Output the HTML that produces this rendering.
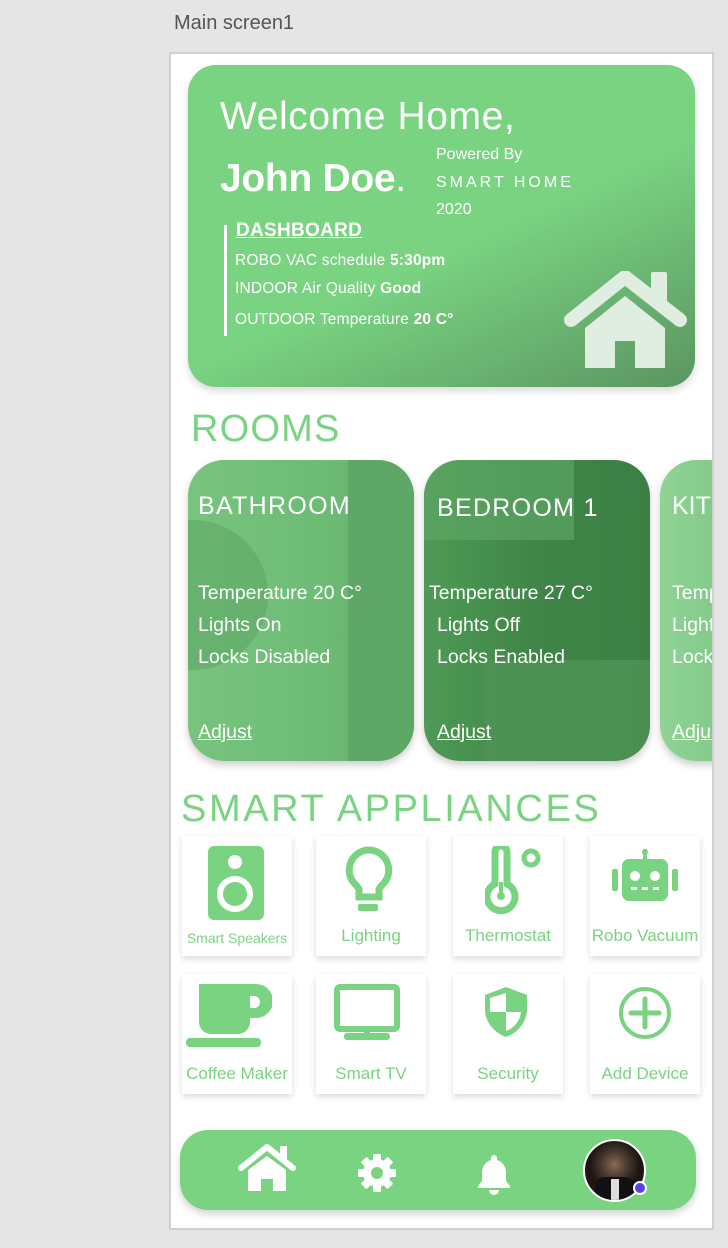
<!DOCTYPE html>
<html><head><meta charset="utf-8"><style>
*{margin:0;padding:0;box-sizing:border-box}
body{width:728px;height:1248px;background:#e5e5e5;font-family:"Liberation Sans",sans-serif;position:relative;overflow:hidden}
.a{position:absolute}
.frame{left:169px;top:52px;width:545px;height:1178px;background:#fff;border:2px solid #d0d0d0;overflow:hidden}
.w{color:#fff;white-space:nowrap}
.g{color:#79d381;white-space:nowrap}
.tile{background:#fff;box-shadow:0 3px 6px rgba(0,0,0,.14);width:110px;height:120px}
.tile span{position:absolute;left:0;right:0;bottom:10px;text-align:center;font-size:17px;color:#79d381;white-space:nowrap}
.room{width:226px;height:301px;border-radius:36px;overflow:hidden;box-shadow:0 4px 8px rgba(0,0,0,.2)}
.room .w{position:absolute;font-size:19.5px}
</style></head><body>
<div class="a" style="left:174px;top:12px;font-size:20px;color:#555">Main screen1</div>
<div class="a frame">
 <div class="a" style="left:17px;top:11px;width:507px;height:322px;border-radius:28px;background:linear-gradient(155deg,#79d381 0%,#79d381 55%,#5b9561 100%);box-shadow:0 4px 8px rgba(0,0,0,.15)">
  <div class="a w" style="left:32px;top:30px;font-size:39px;letter-spacing:.6px">Welcome Home,</div>
  <div class="a w" style="left:32px;top:92px;font-size:39px;font-weight:bold;letter-spacing:-0.3px">John Doe<span style="font-weight:normal">.</span></div>
  <div class="a w" style="left:248px;top:81px;font-size:16px">Powered By</div>
  <div class="a w" style="left:248px;top:109px;font-size:16px;letter-spacing:3px">SMART HOME</div>
  <div class="a w" style="left:248px;top:136px;font-size:16px">2020</div>
  <div class="a" style="left:36px;top:160px;width:3px;height:111px;background:#fff"></div>
  <div class="a w" style="left:48px;top:155px;font-size:19px;font-weight:bold;text-decoration:underline;letter-spacing:.3px">DASHBOARD</div>
  <div class="a w" style="left:47px;top:187px;font-size:15.5px;letter-spacing:.2px">ROBO VAC schedule <b>5:30pm</b></div>
  <div class="a w" style="left:47px;top:215px;font-size:15.5px;letter-spacing:.2px">INDOOR Air Quality <b>Good</b></div>
  <div class="a w" style="left:47px;top:246px;font-size:15.5px;letter-spacing:.2px">OUTDOOR Temperature <b>20 C°</b></div>
  <svg class="a" style="left:376px;top:206px" width="124" height="100" viewBox="0 0 124 100">
   <g fill="#e0ede1"><rect x="87" y="1" width="16" height="35" rx="2"/>
   <path d="M7 49 L61 6 L116 49" fill="none" stroke="#e0ede1" stroke-width="14" stroke-linecap="round" stroke-linejoin="round"/>
   <path d="M21 57 L61 25 L101 57 L101 97 L71 97 L71 70 L51 70 L51 97 L21 97Z"/></g>
  </svg>
 </div>
 <div class="a g" style="left:20px;top:354px;font-size:38px;letter-spacing:1.2px">ROOMS</div>
 <div class="a room" style="left:17px;top:406px;background:linear-gradient(90deg,#78c47f 0%,#6dbb74 60%,#5fae67 100%)">
  <div class="a" style="left:0;top:60px;width:80px;height:150px;border-radius:0 80px 80px 0;background:#5ea665;opacity:.6"></div>
  <div class="a" style="left:160px;top:0;width:66px;height:301px;background:#5ea767"></div>
  <div class="w" style="left:10px;top:32px;font-size:25px;letter-spacing:1.3px">BATHROOM</div>
  <div class="w" style="left:10px;top:122px">Temperature 20 C°</div>
  <div class="w" style="left:10px;top:154px">Lights On</div>
  <div class="w" style="left:10px;top:186px">Locks Disabled</div>
  <div class="w" style="left:10px;top:261px;text-decoration:underline">Adjust</div>
 </div>
 <div class="a room" style="left:253px;top:406px;background:linear-gradient(90deg,#4e9a56 0%,#3f8547 50%,#3c7f44 100%)">
  <div class="a" style="left:0;top:0;width:150px;height:80px;background:#5da564;opacity:.7"></div>
  <div class="a" style="left:60px;top:200px;width:166px;height:101px;background:#4f9256;opacity:.8"></div>
  <div class="w" style="left:13px;top:34px;font-size:25px;letter-spacing:1.3px">BEDROOM 1</div>
  <div class="w" style="left:5px;top:122px">Temperature 27 C°</div>
  <div class="w" style="left:13px;top:154px">Lights Off</div>
  <div class="w" style="left:13px;top:186px">Locks Enabled</div>
  <div class="w" style="left:13px;top:261px;text-decoration:underline">Adjust</div>
 </div>
 <div class="a room" style="left:489px;top:406px;background:linear-gradient(90deg,#8fd494,#5fa866)">
  <div class="w" style="left:12px;top:32px;font-size:25px">KITCHEN</div>
  <div class="w" style="left:12px;top:122px">Temperature</div>
  <div class="w" style="left:12px;top:154px">Lights</div>
  <div class="w" style="left:12px;top:186px">Locks</div>
  <div class="w" style="left:12px;top:261px;text-decoration:underline">Adjust</div>
 </div>
 <div class="a g" style="left:10px;top:734px;font-size:38px;letter-spacing:2.6px">SMART APPLIANCES</div>
 <div class="a tile" style="left:11px;top:782px">
  <svg class="a" style="left:26px;top:10px" width="56" height="74" viewBox="0 0 56 74"><rect x="0" y="0" width="56" height="74" rx="6" fill="#79d381"/><circle cx="27" cy="16" r="7" fill="#fff"/><circle cx="27" cy="48" r="15" fill="none" stroke="#fff" stroke-width="6"/></svg>
  <span style="font-size:14px">Smart Speakers</span></div>
 <div class="a tile" style="left:145px;top:782px">
  <svg class="a" style="left:28px;top:10px" width="50" height="68" viewBox="0 0 50 68"><path d="M25 4a20 20 0 0 0-13 35l3 4v8h20v-8l3-4A20 20 0 0 0 25 4z" fill="none" stroke="#79d381" stroke-width="7"/><rect x="14" y="58" width="20" height="7" rx="2" fill="#79d381"/></svg>
  <span>Lighting</span></div>
 <div class="a tile" style="left:282px;top:782px">
  <svg class="a" style="left:32px;top:10px" width="60" height="70" viewBox="0 0 60 70"><path d="M10 6a6 6 0 0 1 12 0v32a14 14 0 1 1-12 0z" fill="none" stroke="#79d381" stroke-width="7" stroke-linejoin="round"/><circle cx="16" cy="50" r="4" fill="#79d381"/><rect x="14" y="36" width="4" height="14" fill="#79d381"/><circle cx="46" cy="12" r="7" fill="none" stroke="#79d381" stroke-width="5"/></svg>
  <span>Thermostat</span></div>
 <div class="a tile" style="left:419px;top:782px">
  <svg class="a" style="left:22px;top:13px" width="66" height="58" viewBox="0 0 66 58"><rect x="31" y="0" width="4" height="12" fill="#79d381"/><circle cx="33" cy="3" r="3" fill="#79d381"/><rect x="10" y="10" width="46" height="42" rx="7" fill="#79d381"/><rect x="0" y="20" width="6" height="22" rx="2" fill="#79d381"/><rect x="60" y="20" width="6" height="22" rx="2" fill="#79d381"/><circle cx="23" cy="27" r="5" fill="#fff"/><circle cx="43" cy="27" r="5" fill="#fff"/><rect x="19" y="38" width="6" height="3" fill="#fff"/><rect x="30" y="38" width="6" height="3" fill="#fff"/><rect x="41" y="38" width="6" height="3" fill="#fff"/></svg>
  <span>Robo Vacuum</span></div>
 <div class="a tile" style="left:11px;top:920px">
  <svg class="a" style="left:4px;top:8px" width="86" height="66" viewBox="0 0 86 66"><path d="M13 2h57a15 15 0 0 1 0 34h-6v4a12 12 0 0 1-12 12H25a12 12 0 0 1-12-12z" fill="#79d381"/><path d="M64 14h4a6 6 0 0 1 0 12h-4z" fill="#fff"/><rect x="0" y="56" width="75" height="9" rx="4" fill="#79d381"/></svg>
  <span>Coffee Maker</span></div>
 <div class="a tile" style="left:145px;top:920px">
  <svg class="a" style="left:18px;top:10px" width="68" height="58" viewBox="0 0 68 58"><rect x="3" y="3" width="60" height="42" rx="3" fill="none" stroke="#79d381" stroke-width="6"/><rect x="30" y="44" width="6" height="6" fill="#79d381"/><rect x="10" y="49" width="46" height="7" rx="3" fill="#79d381"/></svg>
  <span>Smart TV</span></div>
 <div class="a tile" style="left:282px;top:920px">
  <svg class="a" style="left:30px;top:12px" width="46" height="52" viewBox="0 0 46 52"><path d="M23 1L2 9v14c0 14 10 24 21 28 11-4 21-14 21-28V9z" fill="#79d381"/><path d="M23 7v19H7V12z" fill="#fff"/><path d="M23 26h15c-1 9-7 16-15 19z" fill="#fff"/></svg>
  <span>Security</span></div>
 <div class="a tile" style="left:419px;top:920px">
  <svg class="a" style="left:28px;top:12px" width="54" height="54" viewBox="0 0 54 54"><circle cx="27" cy="27" r="24" fill="none" stroke="#79d381" stroke-width="4"/><path d="M27 13v28M13 27h28" stroke="#79d381" stroke-width="5" stroke-linecap="round"/></svg>
  <span>Add Device</span></div>
 <div class="a" style="left:9px;top:1076px;width:516px;height:80px;border-radius:28px;background:#79d381;box-shadow:0 4px 8px rgba(0,0,0,.18)">
  <svg class="a" style="left:58px;top:14px" width="58" height="48" viewBox="0 0 58 48"><rect x="42" y="2" width="7" height="16" fill="#fff"/><path d="M3 24L29 3l26 21" fill="none" stroke="#fff" stroke-width="6" stroke-linecap="round" stroke-linejoin="round"/><path d="M10 26L29 12l19 14v21H35V35H23v12H10z" fill="#fff"/></svg>
  <svg class="a" style="left:177px;top:23px" width="40" height="40" viewBox="0 0 40 40"><g fill="#fff" transform="translate(20 20)"><circle r="14"/><g id="t"><rect x="-4" y="-19" width="8" height="8" rx="1"/></g><use href="#t" transform="rotate(45)"/><use href="#t" transform="rotate(90)"/><use href="#t" transform="rotate(135)"/><use href="#t" transform="rotate(180)"/><use href="#t" transform="rotate(225)"/><use href="#t" transform="rotate(270)"/><use href="#t" transform="rotate(315)"/></g><circle cx="20" cy="20" r="6" fill="#79d381"/></svg>
  <svg class="a" style="left:297px;top:24px" width="34" height="42" viewBox="0 0 34 42"><path d="M17 1a3 3 0 0 1 3 3v2c6 2 9 7 9 13v8l4 5v2H1v-2l4-5v-8c0-6 3-11 9-13V4a3 3 0 0 1 3-3z" fill="#fff"/><path d="M12 36h10a5 5 0 0 1-10 0z" fill="#fff"/></svg>
  <div class="a" style="left:403px;top:9px;width:63px;height:63px;border-radius:50%;border:2px solid #fff;background:radial-gradient(circle at 50% 40%,#8a6a55 0%,#4a3a30 28%,#1b1412 55%,#2a1a20 100%);overflow:hidden">
   <div class="a" style="left:10px;top:36px;width:40px;height:30px;background:#121012;border-radius:10px 10px 0 0"></div>
   <div class="a" style="left:26px;top:38px;width:8px;height:22px;background:#ddd"></div>
  </div>
  <div class="a" style="left:453px;top:51px;width:14px;height:14px;border-radius:50%;background:#5147e6;border:2px solid #fff"></div>
 </div>
</div>
</body></html>
